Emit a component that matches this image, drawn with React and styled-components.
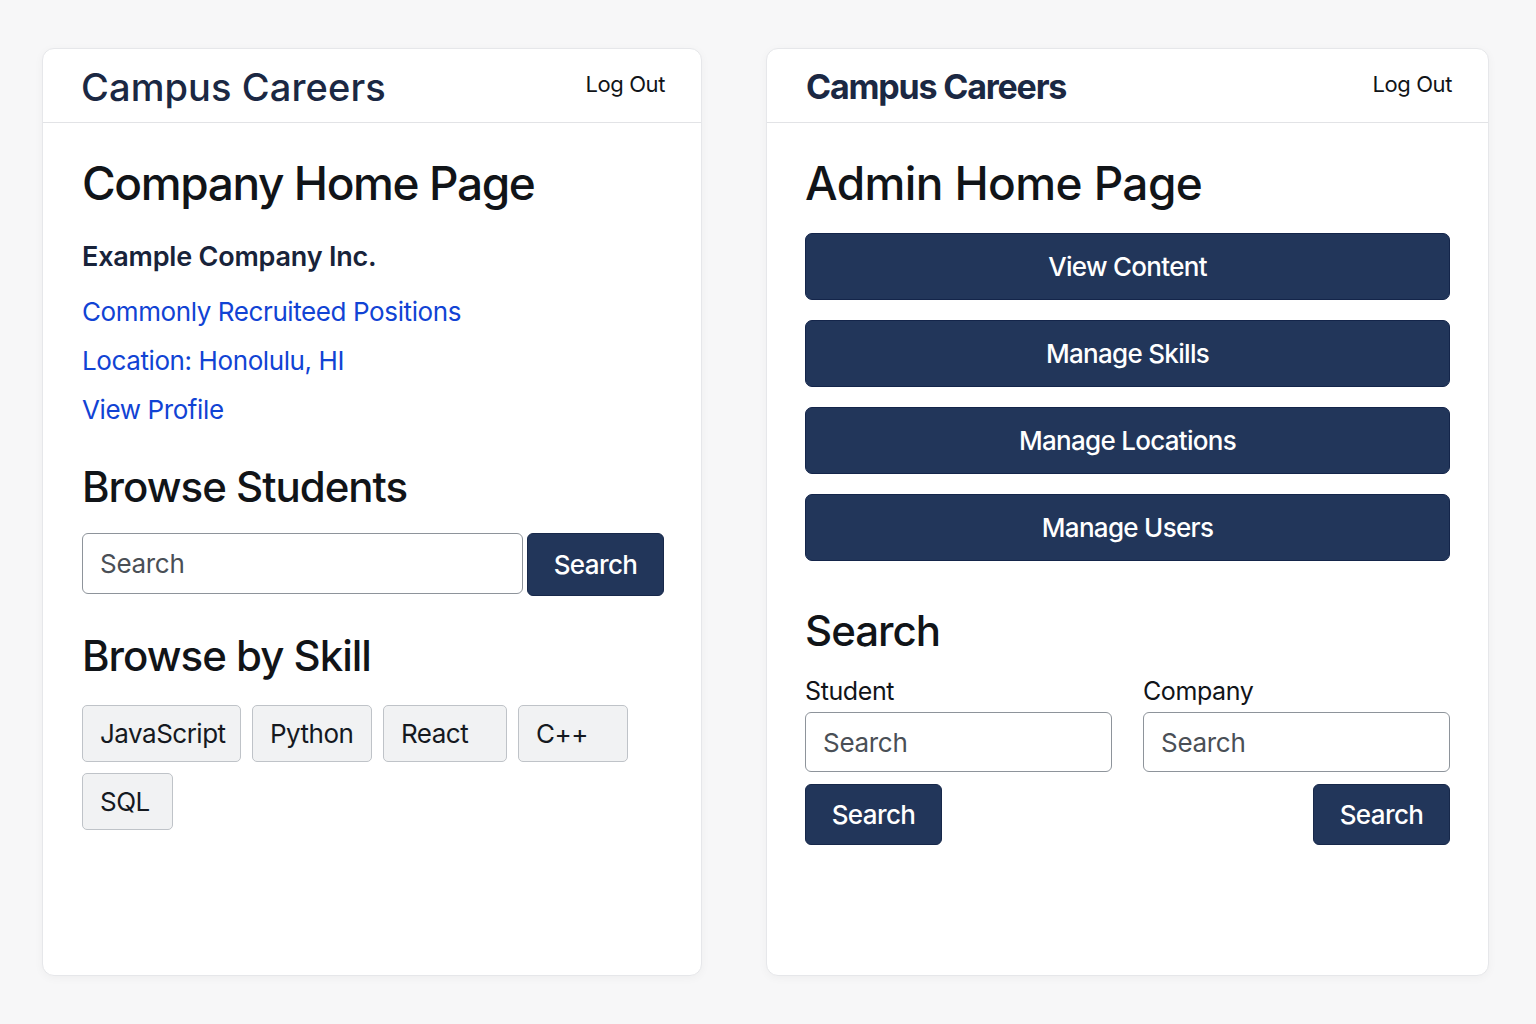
import React from "react";
import styled, { createGlobalStyle } from "styled-components";

const GlobalStyle = createGlobalStyle`
  html, body {
    margin: 0;
    padding: 0;
    background: #f7f7f8;
    font-family: Inter, "Liberation Sans", Arial, sans-serif;
    color: #111418;
  }
  * {
    box-sizing: border-box;
  }
`;

const navy = "#22365a";

const Page = styled.div`
  display: flex;
  align-items: flex-start;
  gap: 64px;
  padding: 48px 47px 49px 42px;
  width: 1536px;
  height: 1024px;
`;

const Card = styled.div`
  width: ${({ $w }) => $w}px;
  height: 928px;
  background: #ffffff;
  border: 1px solid #e6e7ea;
  border-radius: 12px;
  box-shadow: 0 2px 10px rgba(0, 0, 0, 0.04);
  display: flex;
  flex-direction: column;
  overflow: hidden;
`;

const Header = styled.header`
  height: 74px;
  display: flex;
  align-items: center;
  justify-content: space-between;
  padding: 0 36px 0 ${({ $pl }) => $pl || 39}px;
  border-bottom: 1px solid #e2e3e6;
`;

const Brand = styled.div`
  font-size: ${({ $bold }) => ($bold ? "34px" : "38px")};
  font-weight: ${({ $bold }) => ($bold ? 700 : 500)};
  letter-spacing: ${({ $bold }) => ($bold ? "-1.2px" : "0.1px")};
  color: #1b2843;
  margin-top: 2px;
`;

const LogOut = styled.a`
  font-size: 22px;
  color: #111418;
  text-decoration: none;
  letter-spacing: -0.4px;
  margin-bottom: 4px;
`;

const Body = styled.div`
  padding: 32px 38px 0 ${({ $pl }) => $pl || 39}px;
  display: flex;
  flex-direction: column;
`;

const PageTitle = styled.h1`
  margin: 0;
  font-size: 46px;
  font-weight: 500;
  letter-spacing: ${({ $ls }) => $ls ?? -1.4}px;
  line-height: 56px;
`;

const SectionTitle = styled.h2`
  margin: ${({ $mt }) => $mt || 0}px 0 0;
  font-size: 42px;
  font-weight: 500;
  letter-spacing: -1px;
  line-height: 52px;
`;

const CompanyName = styled.div`
  margin-top: 28px;
  font-size: 27px;
  font-weight: 600;
  color: #18233a;
  line-height: 36px;
  letter-spacing: -0.2px;
`;

const LinkList = styled.div`
  display: flex;
  flex-direction: column;
  gap: 13px;
  margin-top: 19px;
`;

const BlueLink = styled.a`
  font-size: 26px;
  color: #1143d4;
  text-decoration: none;
  line-height: 36px;
  letter-spacing: -0.4px;
`;

const SearchRow = styled.div`
  display: flex;
  gap: 4px;
  margin-top: 20px;
  width: 582px;
`;

const Input = styled.input`
  flex: 1;
  min-width: 0;
  height: ${({ $h }) => $h || 61}px;
  border: 1px solid #8e949b;
  border-radius: 6px;
  padding: 0 17px;
  font-size: 26px;
  font-family: inherit;
  letter-spacing: -0.3px;
  color: #111418;
  background: #fff;
  &::placeholder {
    color: #4a4f56;
  }
`;

const DarkButton = styled.button`
  flex-shrink: 0;
  height: ${({ $h }) => $h || 62}px;
  width: ${({ $w }) => $w || 137}px;
  background: ${navy};
  color: #ffffff;
  border: 1px solid #17284a;
  border-radius: 6px;
  font-size: 26px;
  font-weight: 500;
  font-family: inherit;
  letter-spacing: -0.6px;
`;

const Chips = styled.div`
  display: flex;
  flex-wrap: wrap;
  gap: 11px 11px;
  margin-top: 23px;
  width: 560px;
`;

const Chip = styled.button`
  width: ${({ $w }) => $w}px;
  height: 57px;
  text-align: left;
  padding: 0 17px;
  background: #f1f2f3;
  border: 1px solid #bfc3c8;
  border-radius: 5px;
  font-size: 26px;
  font-family: inherit;
  letter-spacing: -0.5px;
  color: #15191f;
`;

const MenuList = styled.div`
  display: flex;
  flex-direction: column;
  gap: 20px;
  margin-top: 22px;
`;

const MenuButton = styled.button`
  height: 67px;
  width: 100%;
  background: ${navy};
  color: #ffffff;
  border: 1px solid #14254a;
  border-radius: 7px;
  font-size: 26px;
  font-weight: 500;
  font-family: inherit;
  letter-spacing: -0.7px;
`;

const SearchGrid = styled.div`
  display: grid;
  grid-template-columns: 1fr 1fr;
  column-gap: 31px;
  margin-top: 17px;
`;

const Field = styled.div`
  display: flex;
  flex-direction: column;
  align-items: ${({ $end }) => ($end ? "flex-end" : "flex-start")};
`;

const Label = styled.label`
  font-size: 25px;
  line-height: 34px;
  margin-bottom: 4px;
  align-self: flex-start;
  letter-spacing: -0.4px;
`;

const FullInput = styled(Input)`
  width: 100%;
  flex: none;
  margin-bottom: 12px;
`;

const skills = [
  { name: "JavaScript", w: 159 },
  { name: "Python", w: 120 },
  { name: "React", w: 124 },
  { name: "C++", w: 110 },
  { name: "SQL", w: 91 },
];

const CompanyHome = () => (
  <Card $w={660}>
    <Header $pl={38}>
      <Brand>Campus Careers</Brand>
      <LogOut href="#">Log Out</LogOut>
    </Header>
    <Body>
      <PageTitle>Company Home Page</PageTitle>
      <CompanyName>Example Company Inc.</CompanyName>
      <LinkList>
        <BlueLink href="#">Commonly Recruiteed Positions</BlueLink>
        <BlueLink href="#">Location: Honolulu, HI</BlueLink>
        <BlueLink href="#">View Profile</BlueLink>
      </LinkList>
      <SectionTitle $mt={33}>Browse Students</SectionTitle>
      <SearchRow>
        <Input placeholder="Search" />
        <DarkButton $h={63}>Search</DarkButton>
      </SearchRow>
      <SectionTitle $mt={34}>Browse by Skill</SectionTitle>
      <Chips>
        {skills.map((s) => (
          <Chip key={s.name} $w={s.w}>
            {s.name}
          </Chip>
        ))}
      </Chips>
    </Body>
  </Card>
);

const AdminHome = () => (
  <Card $w={723}>
    <Header>
      <Brand $bold>Campus Careers</Brand>
      <LogOut href="#">Log Out</LogOut>
    </Header>
    <Body $pl={38}>
      <PageTitle $ls={-0.6}>Admin Home Page</PageTitle>
      <MenuList>
        <MenuButton>View Content</MenuButton>
        <MenuButton>Manage Skills</MenuButton>
        <MenuButton>Manage Locations</MenuButton>
        <MenuButton>Manage Users</MenuButton>
      </MenuList>
      <SectionTitle $mt={44}>Search</SectionTitle>
      <SearchGrid>
        <Field>
          <Label>Student</Label>
          <FullInput $h={60} placeholder="Search" />
          <DarkButton $h={61}>Search</DarkButton>
        </Field>
        <Field $end>
          <Label>Company</Label>
          <FullInput $h={60} placeholder="Search" />
          <DarkButton $h={61}>Search</DarkButton>
        </Field>
      </SearchGrid>
    </Body>
  </Card>
);

const App = () => (
  <>
    <GlobalStyle />
    <Page>
      <CompanyHome />
      <AdminHome />
    </Page>
  </>
);

export default App;
